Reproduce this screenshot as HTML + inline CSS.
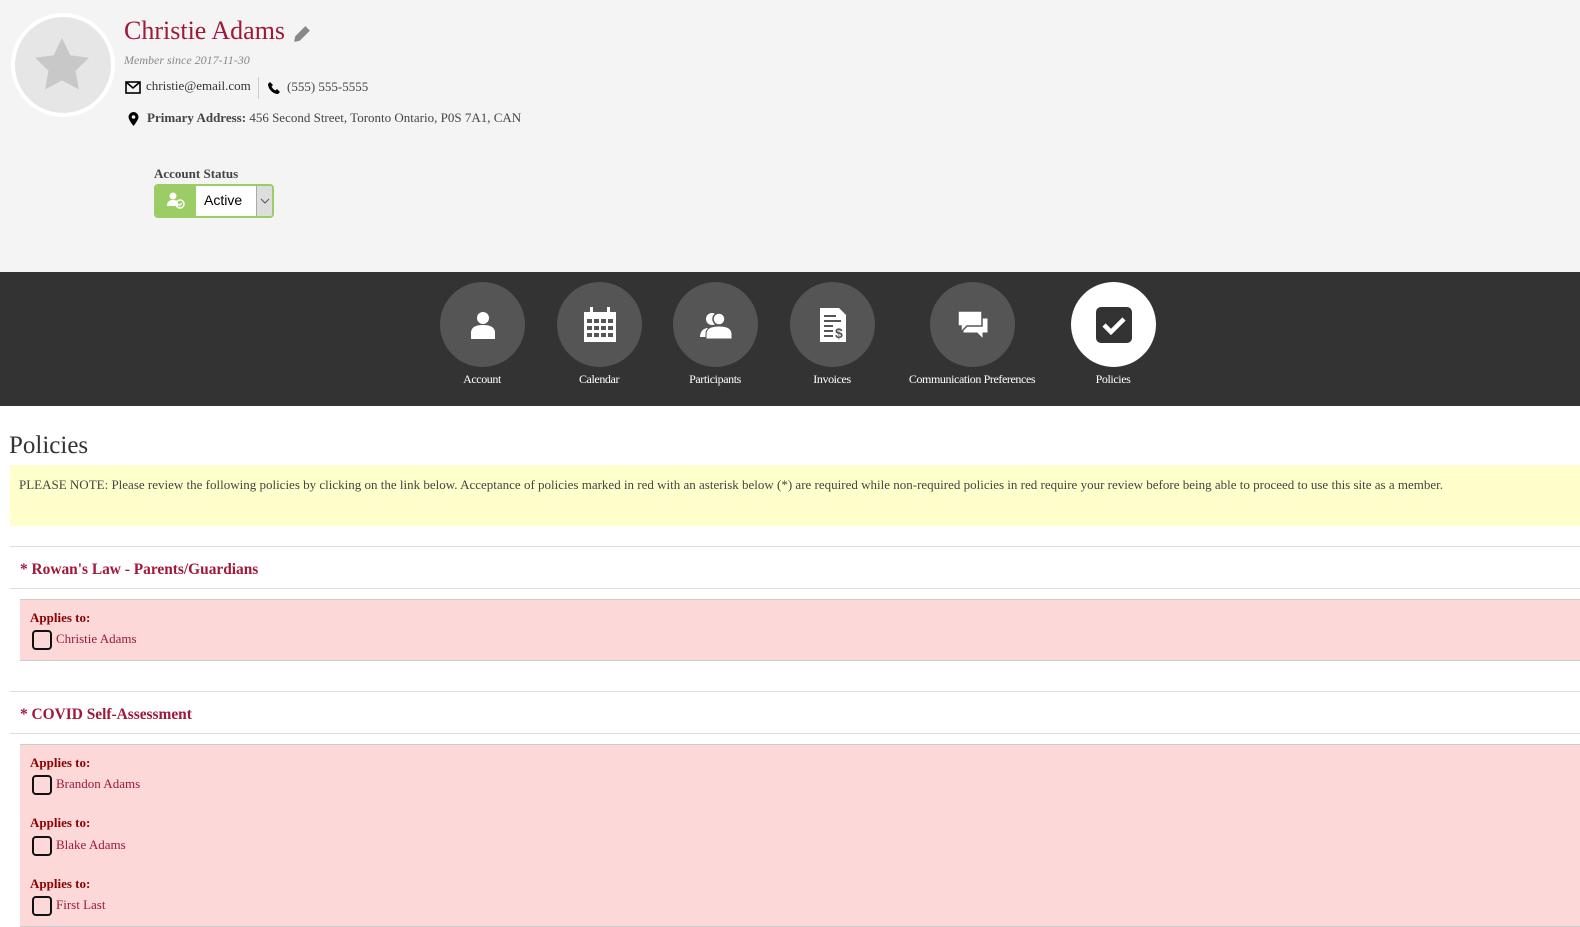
<!DOCTYPE html>
<html><head><meta charset="utf-8"><style>
*{margin:0;padding:0;box-sizing:border-box}
body{width:1580px;height:927px;overflow:hidden;background:#fff;font-family:"Liberation Serif",serif;position:relative}
.a{position:absolute;white-space:nowrap}
.hdr{position:absolute;left:0;top:0;width:1580px;height:272px;background:#f4f4f4}
.nav{position:absolute;left:0;top:272px;width:1580px;height:134px;background:#333}
.c{position:absolute;top:282px;width:85px;height:85px;border-radius:50%;background:#555;display:flex;align-items:center;justify-content:center}
.lbl{position:absolute;top:372px;color:#fff;font-size:12px;transform:translateX(-50%);letter-spacing:-0.4px}
.line{position:absolute;left:10px;width:1570px;height:0;border-top:1px solid #ddd}
.pink{position:absolute;left:20px;width:1560px;background:#fdd8d8;border-top:1px solid #ccc;border-bottom:1px solid #ccc}
.ap{position:absolute;left:10px;font-weight:bold;font-size:13px;color:#8b0000}
.cb{position:absolute;left:12px;width:20px;height:20px;border:2px solid #111;border-radius:4px}
.nm{position:absolute;left:36px;font-size:13px;color:#a0183a}
h3{position:absolute;left:20px;font-size:15.4px;color:#a0183a;font-weight:bold}
</style></head><body>
<div class="hdr"></div>
<div class="a" style="left:11px;top:13px;width:104px;height:104px;border-radius:50%;background:#e6e6e6;border:4px solid #fff"></div>
<svg class="a" style="left:35px;top:38px" width="54" height="52" viewBox="0 0 24 23"><path d="M12 0l3.7 7.6 8.3 1.1-6 5.8 1.5 8.3L12 18.8 4.5 22.8 6 14.5 0 8.7l8.3-1.1z" fill="#c8c8c8"/></svg>
<div class="a" style="left:124px;top:16px;font-size:26px;color:#a0183a">Christie Adams</div>
<svg class="a" style="left:293px;top:25px" width="18" height="18" viewBox="0 0 16 16"><path d="M11 1l4 4-9 9-5 1 1-5z" fill="#888"/></svg>
<div class="a" style="left:124px;top:53px;font-size:12px;font-style:italic;color:#888">Member since 2017-11-30</div>
<svg class="a" style="left:125px;top:81px" width="16" height="13" viewBox="0 0 16 13"><rect x="1" y="1" width="14" height="11" fill="none" stroke="#000" stroke-width="1.6"/><path d="M1 1l7 6 7-6" fill="none" stroke="#000" stroke-width="1.6"/></svg>
<div class="a" style="left:146px;top:78px;font-size:13px;color:#333">christie@email.com</div>
<div class="a" style="left:258px;top:77px;width:1px;height:22px;background:#ccc"></div>
<svg class="a" style="left:268px;top:82px" width="12" height="12" viewBox="0 0 12 12"><path d="M2 0l3 3-1.5 1.5c.8 1.8 2.2 3.2 4 4L9 7l3 3-2 2C5 12 0 7 0 2z" fill="#000"/></svg>
<div class="a" style="left:287px;top:79px;font-size:13px;color:#444">(555) 555-5555</div>
<svg class="a" style="left:128px;top:112px" width="11" height="14" viewBox="0 0 10 14"><path d="M5 0a5 5 0 0 1 5 5c0 3-5 9-5 9S0 8 0 5a5 5 0 0 1 5-5z" fill="#000"/><circle cx="5" cy="5" r="1.8" fill="#f4f4f4"/></svg>
<div class="a" style="left:147px;top:110px;font-size:13px;color:#444"><b>Primary Address:</b> 456 Second Street, Toronto Ontario, P0S 7A1, CAN</div>
<div class="a" style="left:154px;top:166px;font-size:13px;font-weight:bold;color:#444">Account Status</div>
<div class="a" style="left:154px;top:184px;width:120px;height:34px;border:2px solid #9ccc65;border-radius:4px;background:#fff;overflow:hidden">
<div class="a" style="left:0;top:0;width:40px;height:30px;background:#9ccc65"></div>
<svg class="a" style="left:11px;top:6px" width="20" height="18" viewBox="0 0 20 18"><circle cx="6" cy="4" r="3.5" fill="#fff"/><path d="M0 14c0-5 3-6 6-6s4 1 5 2v4z" fill="#fff"/><circle cx="13" cy="12" r="4" fill="none" stroke="#fff" stroke-width="1.5"/><path d="M11 12l1.5 1.5 2.5-2.5" stroke="#fff" stroke-width="1.3" fill="none"/></svg>
<div class="a" style="left:48px;top:6px;font-family:'Liberation Sans',sans-serif;font-size:14px;color:#000">Active</div>
<div class="a" style="left:100px;top:0;width:18px;height:30px;background:#ddd;border-left:1px solid #aaa"></div>
<svg class="a" style="left:104px;top:12px" width="10" height="6" viewBox="0 0 10 6"><path d="M1 1l4 4 4-4" stroke="#555" fill="none"/></svg>
</div>
<div class="nav"></div>
<div class="c" style="left:440px"><svg width="26" height="28" viewBox="0 0 26 28"><circle cx="13" cy="7" r="6" fill="#fff"/><path d="M1 28v-6c0-6 5-8 12-8s12 2 12 8v6z" fill="#fff"/></svg></div>
<div class="c" style="left:557px"><svg width="34" height="36" viewBox="0 0 34 36"><rect x="1" y="5" width="32" height="30" fill="#fff"/><rect x="7" y="0" width="3" height="8" fill="#fff"/><rect x="24" y="0" width="3" height="8" fill="#fff"/><g fill="#555"><rect x="4" y="12" width="5" height="4"/><rect x="11" y="12" width="5" height="4"/><rect x="18" y="12" width="5" height="4"/><rect x="25" y="12" width="5" height="4"/><rect x="4" y="19" width="5" height="4"/><rect x="11" y="19" width="5" height="4"/><rect x="18" y="19" width="5" height="4"/><rect x="25" y="19" width="5" height="4"/><rect x="4" y="26" width="5" height="4"/><rect x="11" y="26" width="5" height="4"/><rect x="18" y="26" width="5" height="4"/><rect x="25" y="26" width="5" height="4"/></g></svg></div>
<div class="c" style="left:673px"><svg width="32" height="28" viewBox="0 0 32 28"><circle cx="12" cy="8" r="6" fill="#fff"/><path d="M0 26c0-6 4-9 8-9v9z" fill="#fff"/><circle cx="19" cy="8" r="6" fill="#fff" stroke="#555" stroke-width="1.5"/><path d="M6 28v-5c0-6 6-8 13-8s13 2 13 8v5z" fill="#fff" stroke="#555" stroke-width="1"/></svg></div>
<div class="c" style="left:790px"><svg width="28" height="36" viewBox="0 0 28 36"><path d="M1 1h19l7 7v27H1z" fill="#fff"/><g fill="#555"><rect x="5" y="8" width="12" height="2"/><rect x="5" y="13" width="17" height="2"/><rect x="5" y="18" width="9" height="2"/><rect x="5" y="23" width="9" height="2"/><rect x="5" y="28" width="9" height="2"/></g><text x="16" y="31" font-size="14" font-weight="bold" fill="#555" font-family="Liberation Sans">$</text></svg></div>
<div class="c" style="left:930px"><svg width="32" height="30" viewBox="0 0 32 30"><path d="M6 8h25v15h-5v6l-6-6H6z" fill="#fff" stroke="#555" stroke-width="1"/><path d="M1 1h24v15H10l-6 6v-6H1z" fill="#fff" stroke="#555" stroke-width="1.5"/></svg></div>
<div class="c" style="left:1071px;background:#fff"><svg width="36" height="36" viewBox="0 0 36 36"><rect x="0" y="0" width="36" height="36" rx="5" fill="#333"/><path d="M8 18l7 7 13-13" stroke="#fff" stroke-width="4.5" fill="none"/></svg></div>
<div class="lbl" style="left:482px">Account</div>
<div class="lbl" style="left:599px">Calendar</div>
<div class="lbl" style="left:715px">Participants</div>
<div class="lbl" style="left:832px">Invoices</div>
<div class="lbl" style="left:972px">Communication Preferences</div>
<div class="lbl" style="left:1113px">Policies</div>
<div class="a" style="left:9px;top:432px;font-size:25px;color:#333">Policies</div>
<div class="a" style="left:10px;top:465px;width:1570px;height:61px;background:#ffffcc"></div>
<div class="a" style="left:19px;top:477px;font-size:13px;color:#444">PLEASE NOTE: Please review the following policies by clicking on the link below. Acceptance of policies marked in red with an asterisk below (*) are required while non-required policies in red require your review before being able to proceed to use this site as a member.</div>
<div class="line" style="top:546px"></div>
<h3 class="a" style="top:561px">* Rowan's Law - Parents/Guardians</h3>
<div class="line" style="top:588px"></div>
<div class="pink" style="top:599px;height:62px">
<div class="ap" style="top:10px">Applies to:</div><div class="cb" style="top:30px"></div><div class="nm" style="top:31px">Christie Adams</div>
</div>
<div class="line" style="top:691px"></div>
<h3 class="a" style="top:706px">* COVID Self-Assessment</h3>
<div class="line" style="top:733px"></div>
<div class="pink" style="top:744px;height:183px">
<div class="ap" style="top:10px">Applies to:</div><div class="cb" style="top:30px"></div><div class="nm" style="top:31px">Brandon Adams</div>
<div class="ap" style="top:70px">Applies to:</div><div class="cb" style="top:91px"></div><div class="nm" style="top:92px">Blake Adams</div>
<div class="ap" style="top:131px">Applies to:</div><div class="cb" style="top:151px"></div><div class="nm" style="top:152px">First Last</div>
</div>
</body></html>
